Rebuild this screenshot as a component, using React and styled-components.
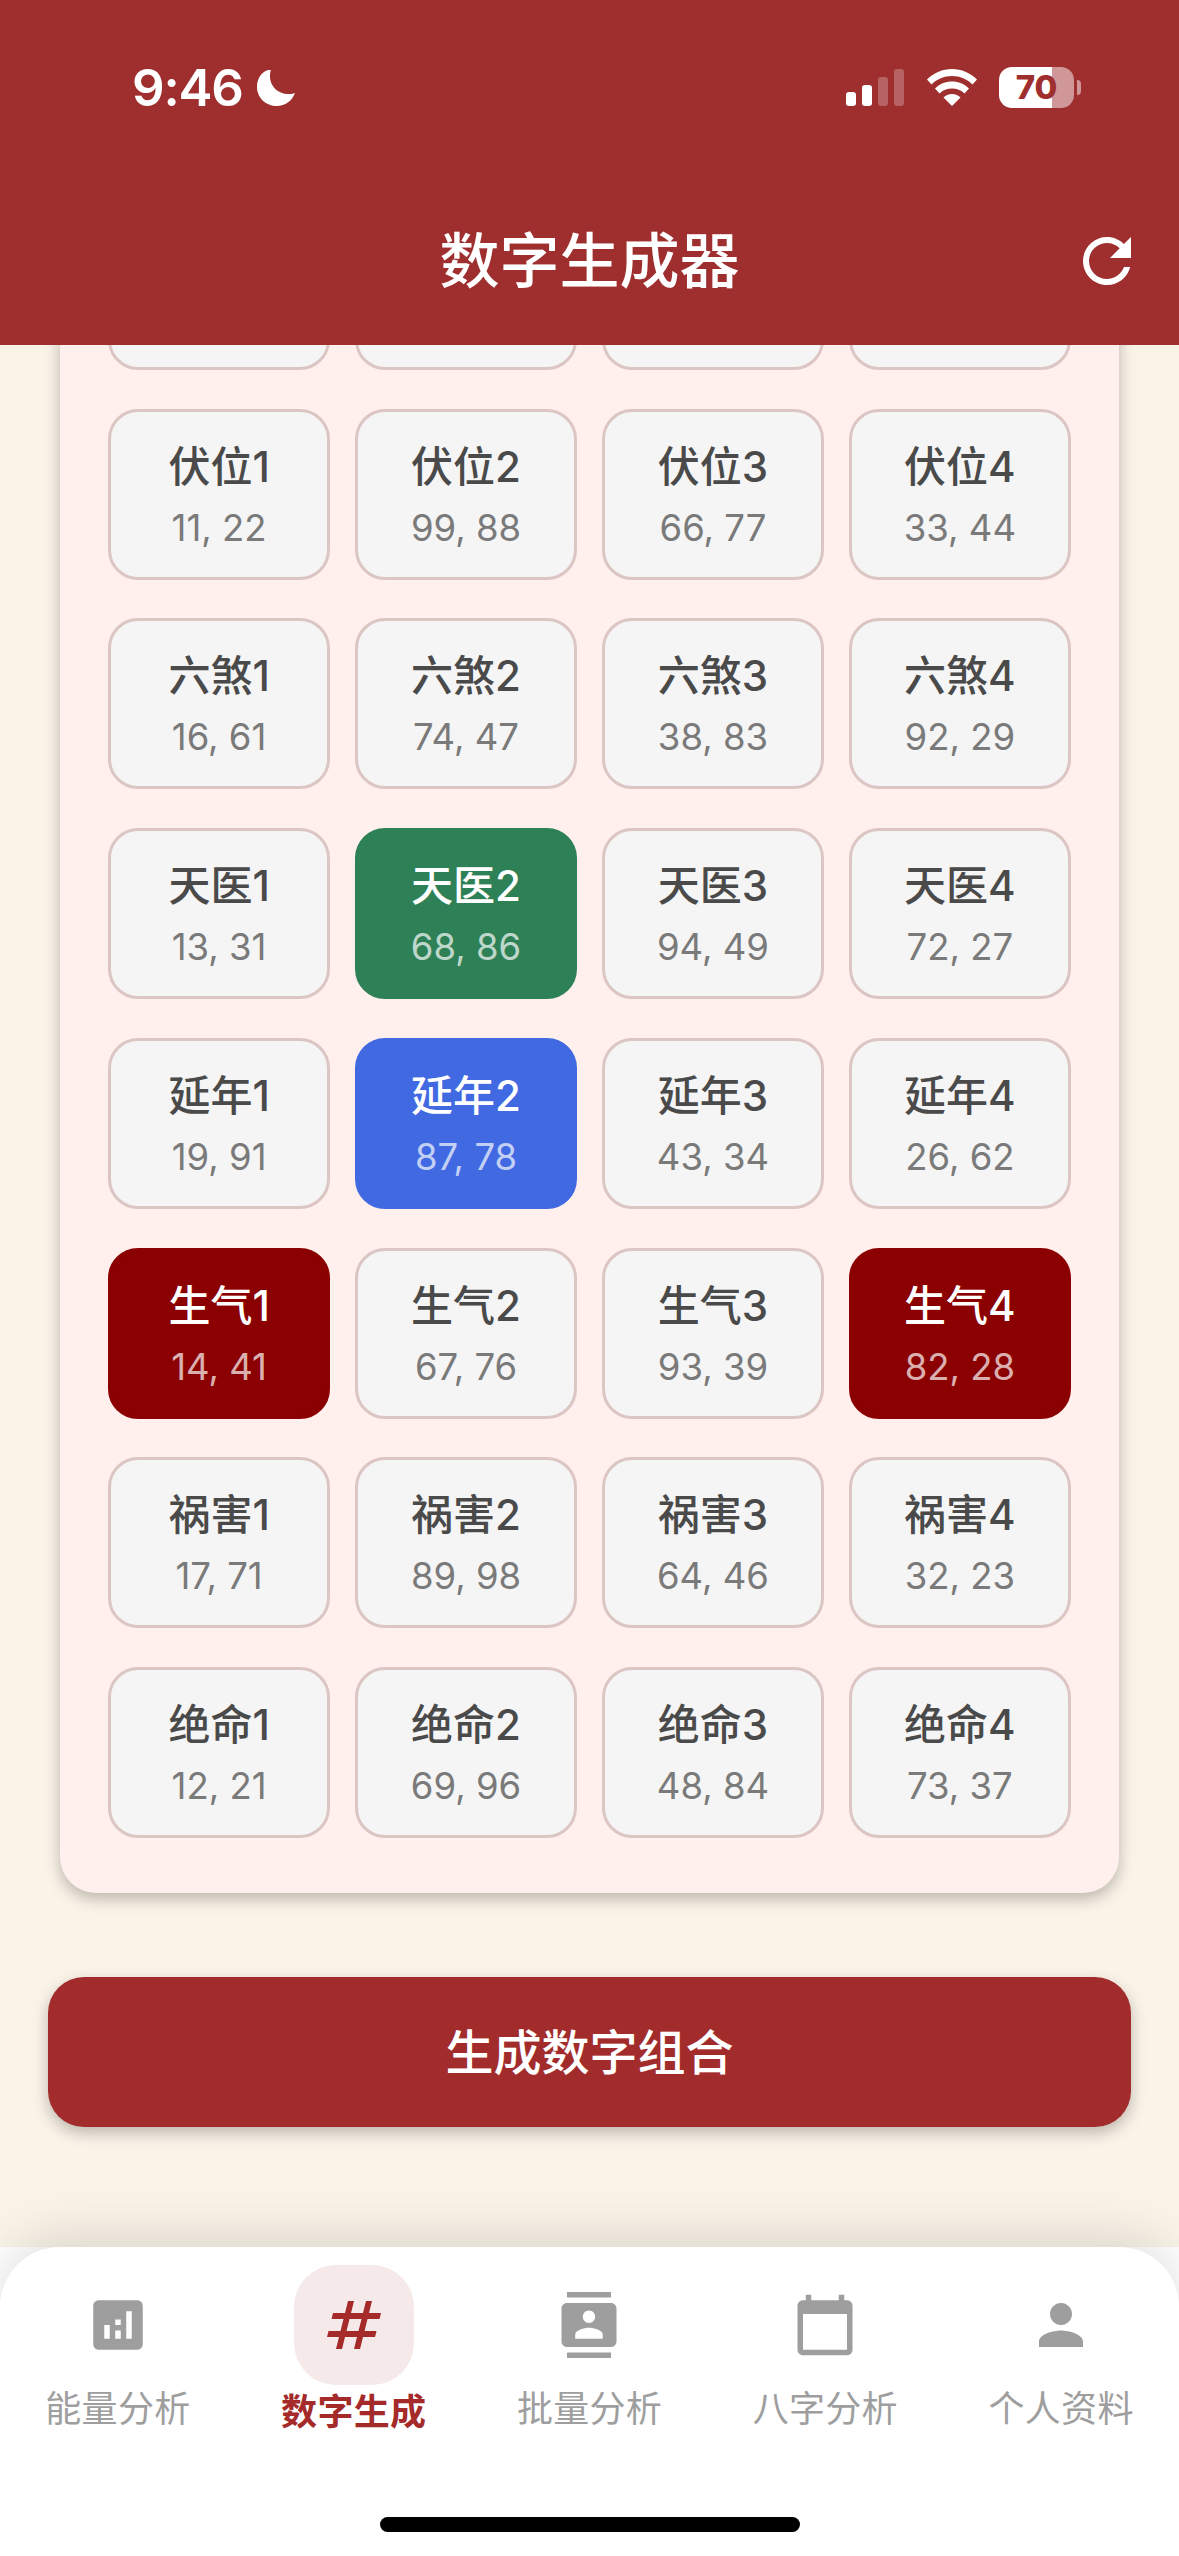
import styled, { createGlobalStyle } from "styled-components";

const GlobalStyle = createGlobalStyle`
  html, body {
    margin: 0;
    padding: 0;
    background: #fff;
  }
  #root {
    width: 1179px;
    height: 2556px;
    overflow: hidden;
  }
`

const fontStack = `Inter, "Noto Sans CJK SC", "Noto Sans", sans-serif`;

const tones = {
  green: "#2e8156",
  blue: "#4169e1",
  red: "#8b0000",
};

const Page = styled.div`
  width: 1179px;
  height: 2556px;
  display: flex;
  flex-direction: column;
  background: #fff;
  font-family: ${fontStack};
`

const Header = styled.header`
  flex: none;
  height: 345px;
  box-sizing: border-box;
  padding-top: 67px;
  background: #9f2f2f;
  color: #fff;
`

const StatusBar = styled.div`
  height: 41px;
  padding: 0 98px 0 132px;
  display: flex;
  align-items: center;
  justify-content: space-between;
`

const TimeGroup = styled.div`
  display: flex;
  align-items: center;
  gap: 14px;
`

const Time = styled.span`
  font-size: 51px;
  font-weight: 600;
  letter-spacing: -1.2px;
  line-height: 41px;
`

const StatusIcons = styled.div`
  display: flex;
  align-items: center;
`

const Signal = styled.div`
  display: flex;
  align-items: flex-end;
  gap: 6px;
  height: 37px;
  margin-right: 23px;
`

const SignalBar = styled.div`
  width: 10px;
  height: ${(p) => p.$h}px;
  border-radius: 3px;
  background: ${(p) => (p.$on ? "#fff" : "rgba(255,255,255,0.25)")};
`

const Battery = styled.div`
  width: 75px;
  height: 41px;
  margin-left: 22px;
  border-radius: 13px;
  background: linear-gradient(to right, #fff 71%, rgba(255,255,255,0.5) 71%);
  color: #9f2f2f;
  font-size: 33px;
  font-weight: 800;
  line-height: 41px;
  text-align: center;
`

const BatteryTip = styled.div`
  width: 4px;
  height: 15px;
  margin-left: 3px;
  border-radius: 0 4px 4px 0;
  background: rgba(255,255,255,0.5);
`

const TitleRow = styled.div`
  margin-top: 117px;
  padding: 0 36px;
  display: grid;
  grid-template-columns: 1fr auto 1fr;
  align-items: center;
`

const Title = styled.h1`
  grid-column: 2;
  margin: 0;
  font-size: 60px;
  font-weight: 500;
  line-height: 72px;
`

const RefreshIcon = styled.svg`
  justify-self: end;
  width: 72px;
  height: 72px;
  fill: #fff;
`

const Scroller = styled.main`
  flex: 1;
  min-height: 0;
  overflow: hidden;
  display: flex;
  flex-direction: column;
  justify-content: flex-end;
  padding: 0 48px 120px;
  background: #faf3e8;
`

const Card = styled.section`
  flex: none;
  margin: 0 12px 84px;
  padding: 48px 48px 55px;
  border-radius: 36px;
  background: #fff0ee;
  box-shadow: 0 6px 15px rgba(0, 0, 0, 0.25);
`

const Grid = styled.div`
  display: grid;
  grid-template-columns: repeat(4, 1fr);
  grid-auto-rows: 171px;
  column-gap: 24.75px;
  row-gap: 38.75px;
`

const Cell = styled.div`
  box-sizing: border-box;
  display: flex;
  flex-direction: column;
  align-items: center;
  justify-content: center;
  gap: 14px;
  padding-top: 1px;
  border-radius: 30px;
  border: 3px solid ${(p) => (p.$tone ? tones[p.$tone] : "#dcc6c3")};
  background: ${(p) => (p.$tone ? tones[p.$tone] : "#f5f5f5")};
`

const CellLabel = styled.div`
  font-size: 42px;
  font-weight: 500;
  line-height: 52px;
  color: ${(p) => (p.$on ? "#fff" : "#4a4a4a")};
`

const CellNumbers = styled.div`
  font-size: 36.5px;
  line-height: 42px;
  color: ${(p) => (p.$on ? "rgba(255,255,255,0.7)" : "#7a7a7a")};
`

const GenerateButton = styled.button`
  flex: none;
  height: 150px;
  padding: 0 0 6px;
  border: none;
  border-radius: 36px;
  background: #a22c2c;
  color: #fff;
  font-family: ${fontStack};
  font-size: 48px;
  font-weight: 500;
  box-shadow: 0 6px 15px rgba(0, 0, 0, 0.25);
`

const Nav = styled.nav`
  flex: none;
  height: 309px;
  box-sizing: border-box;
  padding-top: 18px;
  display: flex;
  flex-direction: column;
  border-radius: 60px 60px 0 0;
  background: #fff;
  box-shadow: 0 -9px 54px rgba(0, 0, 0, 0.13);
  position: relative;
`

const NavRow = styled.div`
  display: grid;
  grid-template-columns: repeat(5, 1fr);
`

const NavItem = styled.div`
  display: flex;
  flex-direction: column;
  align-items: center;
  color: ${(p) => (p.$active ? "#a52a2a" : "#9e9e9e")};
`

const IconPill = styled.div`
  width: 120px;
  height: 120px;
  display: flex;
  align-items: center;
  justify-content: center;
  border-radius: 42px;
  background: ${(p) => (p.$active ? "#f5e9e9" : "transparent")};
`

const NavIcon = styled.svg`
  width: ${(p) => (p.$active ? 72 : 66)}px;
  height: ${(p) => (p.$active ? 72 : 66)}px;
  fill: currentColor;
`

const NavLabel = styled.div`
  margin-top: ${(p) => (p.$active ? 1 : -2)}px;
  font-size: 36px;
  letter-spacing: 0.3px;
  line-height: 52px;
  font-weight: ${(p) => (p.$active ? 600 : 400)};
`

const HomeBar = styled.div`
  width: 420px;
  height: 15px;
  margin: auto auto 24px;
  border-radius: 8px;
  background: #000;
`

const rows = [
  [{}, {}, {}, {}],
  [
    { label: "伏位1", nums: "11, 22" },
    { label: "伏位2", nums: "99, 88" },
    { label: "伏位3", nums: "66, 77" },
    { label: "伏位4", nums: "33, 44" },
  ],
  [
    { label: "六煞1", nums: "16, 61" },
    { label: "六煞2", nums: "74, 47" },
    { label: "六煞3", nums: "38, 83" },
    { label: "六煞4", nums: "92, 29" },
  ],
  [
    { label: "天医1", nums: "13, 31" },
    { label: "天医2", nums: "68, 86", tone: "green" },
    { label: "天医3", nums: "94, 49" },
    { label: "天医4", nums: "72, 27" },
  ],
  [
    { label: "延年1", nums: "19, 91" },
    { label: "延年2", nums: "87, 78", tone: "blue" },
    { label: "延年3", nums: "43, 34" },
    { label: "延年4", nums: "26, 62" },
  ],
  [
    { label: "生气1", nums: "14, 41", tone: "red" },
    { label: "生气2", nums: "67, 76" },
    { label: "生气3", nums: "93, 39" },
    { label: "生气4", nums: "82, 28", tone: "red" },
  ],
  [
    { label: "祸害1", nums: "17, 71" },
    { label: "祸害2", nums: "89, 98" },
    { label: "祸害3", nums: "64, 46" },
    { label: "祸害4", nums: "32, 23" },
  ],
  [
    { label: "绝命1", nums: "12, 21" },
    { label: "绝命2", nums: "69, 96" },
    { label: "绝命3", nums: "48, 84" },
    { label: "绝命4", nums: "73, 37" },
  ],
];

const navItems = [
  {
    label: "能量分析",
    d: "M19 3H5c-1.1 0-2 .9-2 2v14c0 1.1.9 2 2 2h14c1.1 0 2-.9 2-2V5c0-1.1-.9-2-2-2zM9 17H7v-5h2v5zm4 0h-2v-3h2v3zm0-5h-2v-2h2v2zm4 5h-2V7h2v10z",
  },
  {
    label: "数字生成",
    active: true,
    d: "M20.5 10l.5-2h-4l1-4h-2l-1 4h-4l1-4h-2L9 8H5l-.5 2h4l-1 4h-4L3 16h4l-1 4h2l1-4h4l-1 4h2l1-4h4l.5-2h-4l1-4h4zm-7 4h-4l1-4h4l-1 4z",
  },
  {
    label: "批量分析",
    d: "M20 0H4v2h16V0zM4 24h16v-2H4v2zM20 4H4c-1.1 0-2 .9-2 2v12c0 1.1.9 2 2 2h16c1.1 0 2-.9 2-2V6c0-1.1-.9-2-2-2zm-8 2.75c1.24 0 2.25 1.01 2.25 2.25s-1.01 2.25-2.25 2.25S9.75 10.24 9.75 9 10.76 6.75 12 6.75zM17 17H7v-1.5c0-1.67 3.33-2.5 5-2.5s5 .83 5 2.5V17z",
  },
  {
    label: "八字分析",
    d: "M20 3h-1V1h-2v2H7V1H5v2H4c-1.1 0-2 .9-2 2v16c0 1.1.9 2 2 2h16c1.1 0 2-.9 2-2V5c0-1.1-.9-2-2-2zm0 18H4V8h16v13z",
  },
  {
    label: "个人资料",
    d: "M12 12c2.21 0 4-1.79 4-4s-1.79-4-4-4-4 1.79-4 4 1.79 4 4 4zm0 2c-2.67 0-8 1.34-8 4v2h16v-2c0-2.66-5.33-4-8-4z",
  },
];

export default function App() {
  return (
    <Page>
      <GlobalStyle />
      <Header>
        <StatusBar>
          <TimeGroup>
            <Time>9:46</Time>
            <svg width="38" height="37" viewBox="0 0 38 37" fill="#fff">
              <path d="M11 1C4 3 0 10 0 18c0 11 9 19 20 19 8 0 15-5 18-13-2 1-5 1-7 1-10 0-18-8-18-17 0-3 0-5 1-7z" />
            </svg>
          </TimeGroup>
          <StatusIcons>
            <Signal>
              <SignalBar $h={14} $on />
              <SignalBar $h={21} $on />
              <SignalBar $h={29} />
              <SignalBar $h={37} />
            </Signal>
            <svg width="50" height="37" viewBox="0 0 50 37" fill="#fff">
              <path d="M25 0C15.500 0 7 3.800 0 10.500L4.500 15.500C10 10 17 7 25 7s15 3 20.500 8.500L50 10.500C43 3.800 34.500 0 25 0z" />
              <path d="M25 12.500c-6.500 0-12.500 2.500-17 7L12.500 24.500c3.300-3.200 7.700-5 12.500-5s9.200 1.800 12.500 5L42 19.500c-4.500-4.500-10.500-7-17-7z" />
              <path d="M25 25c-3.300 0-6.300 1.200-8.500 3.500L25 37l8.500-8.500C31.300 26.200 28.300 25 25 25z" />
            </svg>
            <Battery>70</Battery>
            <BatteryTip />
          </StatusIcons>
        </StatusBar>
        <TitleRow>
          <Title>数字生成器</Title>
          <RefreshIcon viewBox="0 0 24 24">
            <path d="M17.65 6.35C16.2 4.9 14.21 4 12 4c-4.42 0-7.99 3.58-7.99 8s3.57 8 7.99 8c3.73 0 6.84-2.55 7.73-6h-2.08c-.82 2.33-3.04 4-5.65 4-3.31 0-6-2.69-6-6s2.69-6 6-6c1.66 0 3.14.69 4.22 1.78L13 11h7V4l-2.35 2.35z" />
          </RefreshIcon>
        </TitleRow>
      </Header>

      <Scroller>
        <Card>
          <Grid>
            {rows.flat().map((cell, i) => (
              <Cell key={i} $tone={cell.tone}>
                {cell.label && <CellLabel $on={!!cell.tone}>{cell.label}</CellLabel>}
                {cell.nums && <CellNumbers $on={!!cell.tone}>{cell.nums}</CellNumbers>}
              </Cell>
            ))}
          </Grid>
        </Card>
        <GenerateButton>生成数字组合</GenerateButton>
      </Scroller>

      <Nav>
        <NavRow>
          {navItems.map((item) => (
            <NavItem key={item.label} $active={item.active}>
              <IconPill $active={item.active}>
                <NavIcon viewBox="0 0 24 24" $active={item.active}>
                  <path d={item.d} />
                </NavIcon>
              </IconPill>
              <NavLabel $active={item.active}>{item.label}</NavLabel>
            </NavItem>
          ))}
        </NavRow>
        <HomeBar />
      </Nav>
    </Page>
  );
}
